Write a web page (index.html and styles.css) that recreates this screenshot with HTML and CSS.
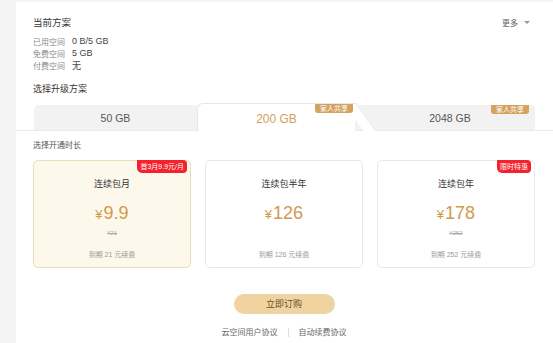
FILE: index.html
```html
<!DOCTYPE html>
<html lang="zh-CN">
<head>
  <meta charset="UTF-8" />
  <meta name="viewport" content="width=device-width, initial-scale=1.0">
  <title>云空间升级</title>
  <link rel="stylesheet" href="styles.css">
</head>
<body>
  <main class="panel">
    <div class="kopf">
      <h3>当前方案</h3>
      <span class="mehr">更多 <i class="pfeil"></i></span>
    </div>
    <div class="info">
      <div class="zeile"><span class="label">已用空间</span>0 B/5 GB</div>
      <div class="zeile"><span class="label">免费空间</span>5 GB</div>
      <div class="zeile"><span class="label">付费空间</span>无</div>
    </div>

    <h4 class="titel">选择升级方案</h4>
    <div class="tabs">
      <div class="tab">50 GB</div>
      <div class="tab aktiv">200 GB<span class="familie">家人共享</span></div>
      <div class="tab letzte">2048 GB<span class="familie">家人共享</span></div>
    </div>

    <div class="untertitel">选择开通时长</div>
    <div class="karten">
      <div class="karte gewaehlt">
        <span class="rabatt">首3月9.9元/月</span>
        <div class="name">连续包月</div>
        <div class="preis"><small>¥</small>9.9</div>
        <div class="alt">¥21</div>
        <div class="hinweis">到期 21 元续费</div>
      </div>
      <div class="karte">
        <div class="name">连续包半年</div>
        <div class="preis"><small>¥</small>126</div>
        <div class="alt leer">&nbsp;</div>
        <div class="hinweis">到期 126 元续费</div>
      </div>
      <div class="karte">
        <span class="rabatt">限时特惠</span>
        <div class="name">连续包年</div>
        <div class="preis"><small>¥</small>178</div>
        <div class="alt">¥252</div>
        <div class="hinweis">到期 252 元续费</div>
      </div>
    </div>

    <div class="aktion">
      <button class="kaufen">立即订购</button>
    </div>
    <div class="links">
      <a href="#">云空间用户协议</a>
      <span class="trenner"></span>
      <a href="#">自动续费协议</a>
    </div>
  </main>
</body>
</html>
```

FILE: styles.css
```css
body {
  margin: 0;
  background: #f4f4f4;
  font-family: "Liberation Sans", "Noto Sans CJK SC", sans-serif;
  color: #333;
}

.panel {
  margin: 2px 0 0 16px;
  background: white;
  padding: 12px 18px 0 17px;
  height: 341px;
  box-sizing: border-box;
  overflow: hidden;
}

.kopf {
  display: flex;
  justify-content: space-between;
  align-items: center;
  height: 16px;
}

.kopf h3 {
  margin: 0;
  font-size: 9.5px;
  font-weight: normal;
  color: #333;
}

.mehr {
  font-size: 8px;
  color: #666;
  margin-right: 5px;
  display: flex;
  align-items: center;
  gap: 6px;
}

.pfeil {
  width: 0;
  height: 0;
  border-left: 3px solid transparent;
  border-right: 3px solid transparent;
  border-top: 3px solid #999;
}

.info {
  margin-top: 5px;
  font-size: 9px;
  color: #444;
}

.zeile {
  display: flex;
  align-items: center;
  height: 12px;
}

.zeile .label {
  width: 39px;
  font-size: 8px;
  color: #888;
}

.titel {
  margin: 10px 0 0;
  font-size: 9px;
  font-weight: normal;
  line-height: 16px;
  color: #333;
}

.tabs {
  display: flex;
  align-items: flex-end;
  height: 28px;
  margin: 5px -18px 0 -17px;
  padding: 0 18px;
  border-bottom: 1px solid #ebebeb;
}

.tab {
  position: relative;
  flex: 0 0 163px;
  height: 25px;
  display: flex;
  align-items: center;
  justify-content: center;
  background: #f2f2f2;
  font-size: 10.5px;
  color: #555;
  border-radius: 5px 0 0 0;
}

.tab.aktiv {
  flex: 0 0 158px;
  height: 28px;
  margin-bottom: -1px;
  box-sizing: border-box;
  background: white;
  border: 1px solid #e6e6e6;
  border-right: none;
  border-bottom: none;
  border-radius: 6px 0 0 0;
  color: #d4a05a;
  font-size: 12px;
  padding-top: 2px;
  z-index: 1;
}

.tab.aktiv::after {
  content: "";
  position: absolute;
  top: -1px;
  bottom: 0;
  left: calc(100% - 12px);
  width: 12px;
  background: white;
  border-top: 1px solid #e6e6e6;
  border-right: 1px solid #e6e6e6;
  transform-origin: top left;
  transform: skewX(36deg);
}

.tab.letzte {
  flex: 1;
  padding-left: 10px;
  border-radius: 0 4px 0 0;
}

.familie {
  position: absolute;
  top: 0;
  right: 6px;
  padding: 0 5px;
  height: 9px;
  line-height: 9px;
  font-size: 7px;
  color: white;
  background: #d4a35f;
  border-radius: 0 0 3px 3px;
  z-index: 2;
}

.tab.aktiv .familie {
  right: 2px;
}

.untertitel {
  margin-top: 8px;
  font-size: 8px;
  line-height: 14px;
  color: #555;
}

.karten {
  display: flex;
  gap: 14px;
  margin-top: 7px;
}

.karte {
  position: relative;
  flex: 0 0 158px;
  height: 108px;
  box-sizing: border-box;
  border: 1px solid #e8e8e8;
  border-radius: 5px;
  padding-top: 15px;
  text-align: center;
}

.karte.gewaehlt {
  background: #fdf8ec;
  border-color: #eedcb6;
}

.rabatt {
  position: absolute;
  top: -1px;
  right: 3px;
  height: 13px;
  line-height: 13px;
  padding: 0 3px;
  font-size: 7px;
  color: white;
  background: #f5222d;
  border-radius: 0 4px 4px 5px;
}

.name {
  font-size: 9px;
  line-height: 16px;
  color: #333;
}

.preis {
  margin-top: 9px;
  font-size: 18px;
  line-height: 24px;
  color: #d09a4e;
}

.preis small {
  font-size: 13px;
  margin-right: 1px;
}

.alt {
  margin-top: 1px;
  font-size: 6px;
  line-height: 10px;
  color: #aaa;
  text-decoration: line-through;
}

.alt.leer {
  text-decoration: none;
}

.hinweis {
  margin-top: 12px;
  font-size: 7px;
  line-height: 10px;
  color: #999;
}

.aktion {
  margin-top: 25px;
  text-align: center;
}

.kaufen {
  width: 101px;
  height: 20px;
  border: none;
  border-radius: 10px;
  background: #efd3a0;
  color: #6b4f2a;
  font-family: inherit;
  font-size: 9px;
  cursor: pointer;
}

.links {
  margin-top: 13px;
  display: flex;
  justify-content: center;
  align-items: center;
  gap: 10px;
  font-size: 8px;
  line-height: 12px;
}

.links a {
  color: #666;
  text-decoration: none;
}

.trenner {
  width: 1px;
  height: 9px;
  background: #ddd;
}
```
